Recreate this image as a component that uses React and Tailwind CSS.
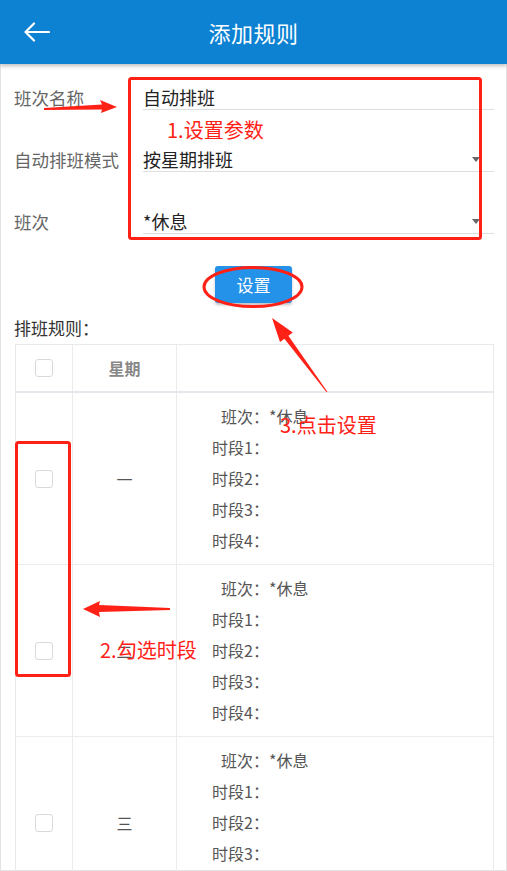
const rows = [
  { day: "一", slots: ["时段1：", "时段2：", "时段3：", "时段4："] },
  { day: "二", slots: ["时段1：", "时段2：", "时段3：", "时段4："] },
  { day: "三", slots: ["时段1：", "时段2：", "时段3：", "时段4："] },
];

function Checkbox() {
  return <div className="w-[18px] h-[18px] rounded-[3px] border-[1.5px] border-[#d9d9d9] bg-white" />;
}

function FormRow({ label, value, select, first }) {
  return (
    <div className={`flex items-end ${first ? "" : "mt-[37px]"}`}>
      <div className="w-[129px] text-[17.5px] leading-[24px] text-[#666]">{label}</div>
      <div className="flex-1 flex items-center border-b border-[#dedede] text-[18px] leading-[24px] text-[#222]">
        <span className="flex-1">{value}</span>
        {select && (
          <span className="mr-[14px] w-0 h-0 border-l-[4px] border-r-[4px] border-t-[5px] border-l-transparent border-r-transparent border-t-[#666]" />
        )}
      </div>
    </div>
  );
}

function Annotations() {
  return (
    <>
      <svg className="absolute inset-0 pointer-events-none" width="507" height="871">
        <rect x="129.5" y="78.5" width="351" height="160" rx="2" fill="none" stroke="#ff2116" strokeWidth="3" />
        <rect x="16.5" y="442.5" width="53" height="233" rx="2" fill="none" stroke="#ff2116" strokeWidth="3" />
        <ellipse cx="253" cy="287" rx="49" ry="19.5" fill="none" stroke="#ff2116" strokeWidth="3" />
        <polygon points="44,108 102,104.5 100,100 117,107 101,113 102,109.5 44,110" fill="#ff2116" />
        <polygon points="170,608 99,605 100,601 83,609 100,617 99,612 170,610" fill="#ff2116" />
        <polygon points="272,318 292.8,332.5 288.4,335.8 327.4,391.7 326.6,392.3 284.4,338.8 280,342.1" fill="#ff2116" />
      </svg>
      <div className="absolute left-[167px] top-[118px] text-[20px] leading-[24px] text-[#ff2116]">1.设置参数</div>
      <div className="absolute left-[280px] top-[413px] text-[20px] leading-[24px] text-[#ff2116]">3.点击设置</div>
      <div className="absolute left-[100px] top-[638px] text-[20px] leading-[24px] text-[#ff2116]">2.勾选时段</div>
    </>
  );
}

export default function App() {
  return (
    <div
      className="relative w-[507px] h-[871px] overflow-hidden bg-white"
      style={{ fontFamily: '"Noto Sans CJK SC", "Noto Sans", sans-serif' }}
    >
      <div className="relative z-10 h-[64px] bg-[#0d82d3] flex items-center justify-center shadow-[0_2px_4px_rgba(0,0,0,0.25)]">
        <svg className="absolute left-[24px] top-[21px]" width="26" height="22" viewBox="0 0 26 22">
          <path d="M1.5 11 H25 M10 2.5 L1.5 11 L10 19.5" fill="none" stroke="#fff" strokeWidth="2.2" strokeLinecap="round" strokeLinejoin="round" />
        </svg>
        <h1 className="text-[22px] text-white tracking-[0.5px]">添加规则</h1>
      </div>

      <div className="h-[807px] border-x border-b border-[#e3e3e3] flex flex-col">
        <div className="pt-[21px] pl-[13px] pr-[12px]">
          <FormRow first label="班次名称" value="自动排班" />
          <FormRow label="自动排班模式" value="按星期排班" select />
          <FormRow label="班次" value="*休息" select />
        </div>

        <div className="flex justify-center mt-[32px]">
          <button className="w-[77px] h-[37px] rounded-[3px] bg-[#2592e9] text-white text-[17px] shadow-[0_2px_3px_rgba(0,0,0,0.25)]">
            设置
          </button>
        </div>

        <div className="mt-[13px] pl-[13px] text-[17px] leading-[24px] text-[#333]">排班规则：</div>

        <div className="mt-[4px] ml-[14px] mr-[12px] border border-[#e9e9ec] text-[16px] text-[#555]">
          <div className="flex h-[48px] border-b-2 border-[#e6e8ee]">
            <div className="w-[57px] border-r border-[#ececec] flex items-center justify-center">
              <Checkbox />
            </div>
            <div className="w-[104px] border-r border-[#ececec] flex items-center justify-center text-[16px] font-bold text-[#888]">
              星期
            </div>
            <div className="flex-1" />
          </div>
          {rows.map((row, i) => (
            <div key={i} className="flex h-[172px] border-b border-[#ececec]">
              <div className="w-[57px] border-r border-[#ececec] flex items-center justify-center">
                <Checkbox />
              </div>
              <div className="w-[104px] border-r border-[#ececec] flex items-center justify-center">{row.day}</div>
              <div className="flex-1 flex flex-col justify-center leading-[31px]">
                <div className="flex">
                  <span className="w-[92px] text-right">班次：</span>
                  <span>*休息</span>
                </div>
                {row.slots.map((s) => (
                  <div key={s} className="flex">
                    <span className="w-[92px] text-right">{s}</span>
                    <span />
                  </div>
                ))}
              </div>
            </div>
          ))}
        </div>
      </div>

      <Annotations />
    </div>
  );
}
